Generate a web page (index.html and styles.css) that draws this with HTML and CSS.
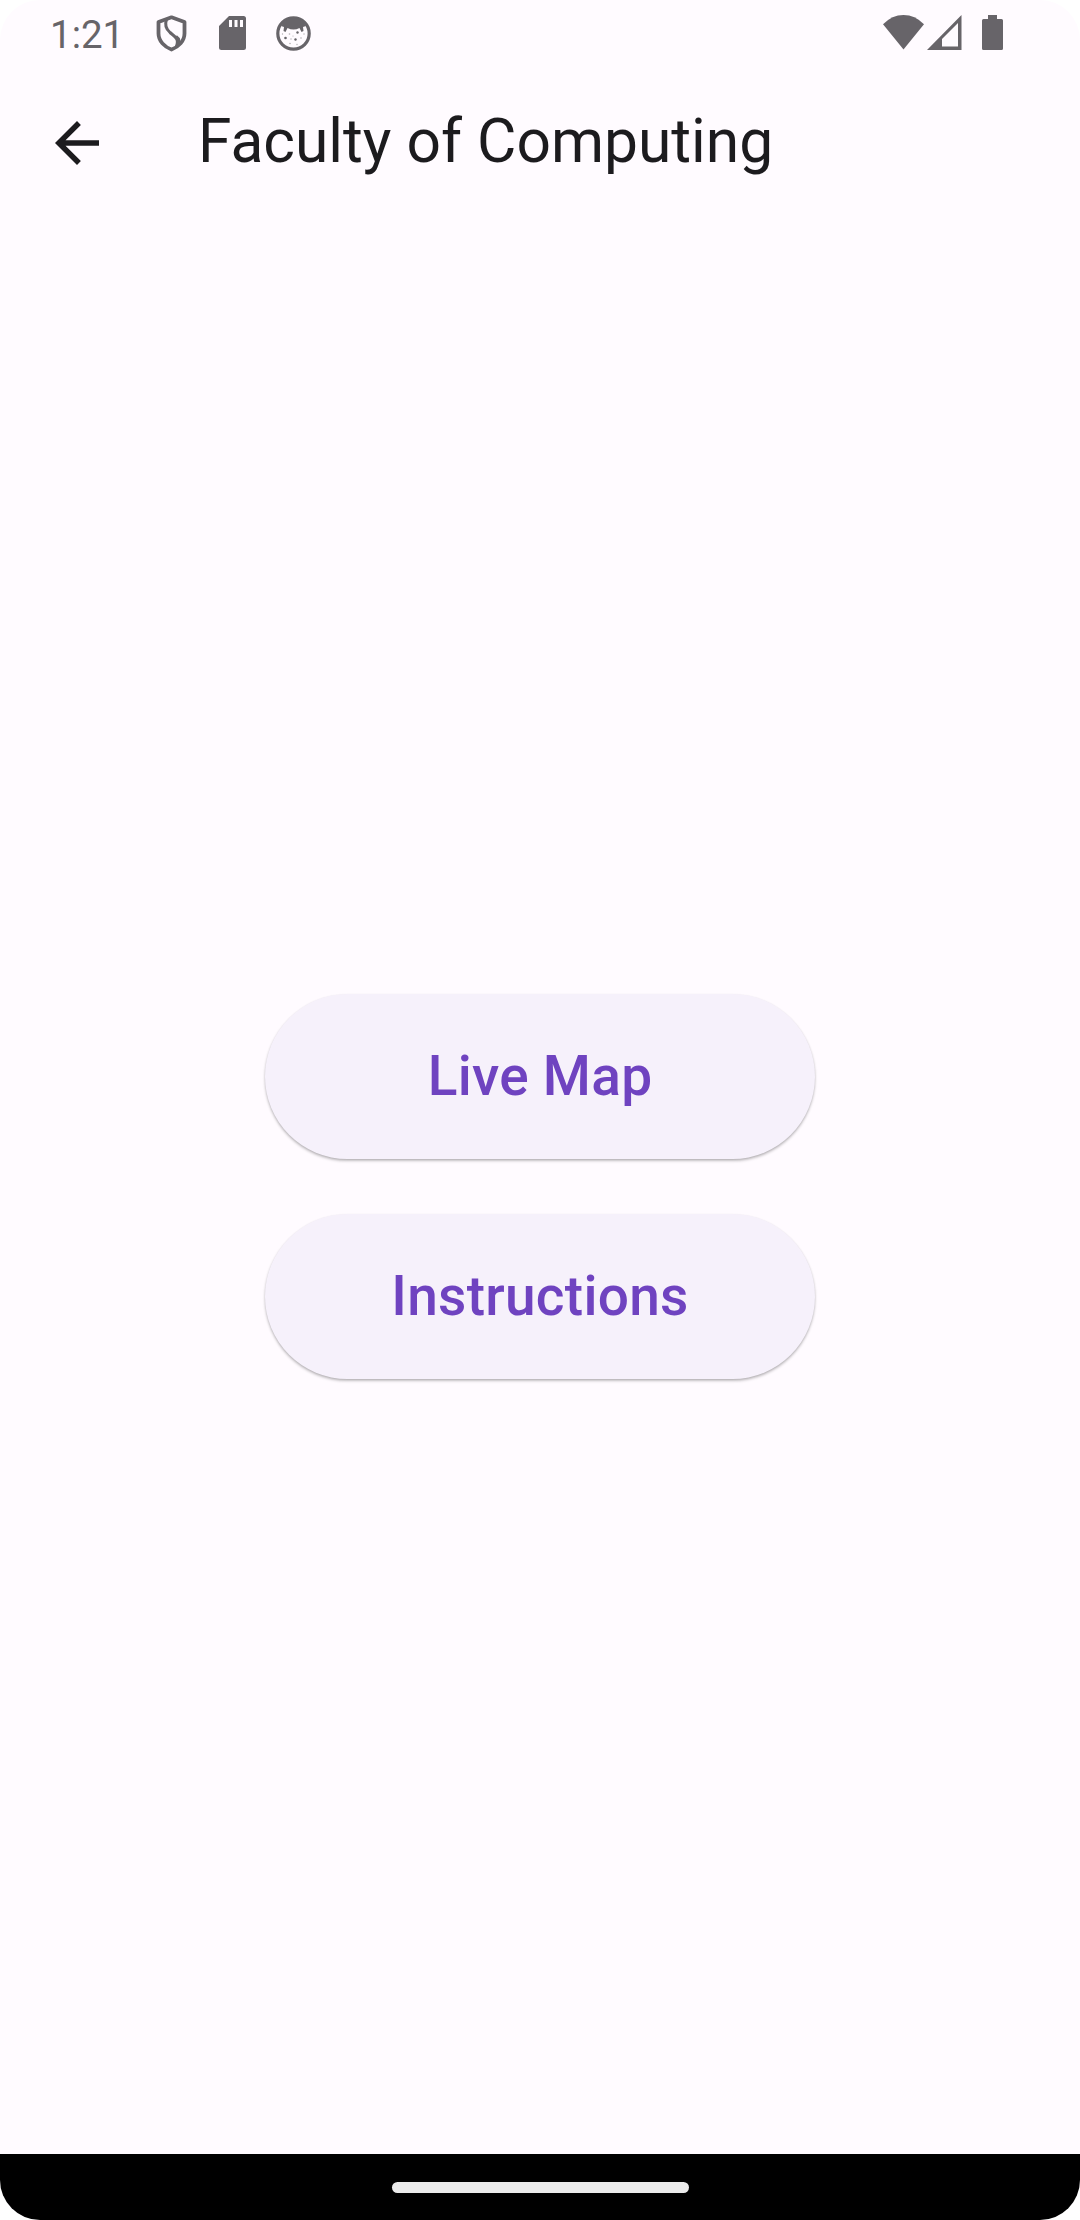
FILE: index.html
```html
<!DOCTYPE html>
<html lang="en">
<head>
<meta charset="utf-8">
<title>Faculty of Computing</title>
<link rel="stylesheet" href="styles.css">
</head>
<body>
<div class="screen">
  <div class="status-bar">
    <div class="status-left">
      <span class="clock">1:21</span>
      <svg class="shield" width="32" height="38" viewBox="0 0 32 38" fill="none" stroke="currentColor" stroke-width="3.800">
        <path d="M15.500 2.300L28.500 7V18.500C28.500 26 22.500 32 15.500 34.500C8.500 32 2.500 26 2.500 18.500V7Z" stroke-linejoin="round"/>
        <path d="M10.500 4.500C8.500 10 9.500 13.500 14 17.500C20 22.500 23.500 24 20 32.500" stroke-width="3"/>
        <path d="M20 21.500C23.500 24 23.500 27 21.500 30" stroke-width="3"/>
      </svg>
      <svg class="sd-card" width="27" height="35" viewBox="0 0 27 35">
        <path fill="currentColor" fill-rule="evenodd" d="M10 0H24.500Q27 0 27 2.500V31.500Q27 34 24.500 34H2.500Q0 34 0 31.500V10ZM10 4V11H13V4ZM15.500 4V11H18.500V4ZM21 4V11H24V4Z"/>
      </svg>
      <svg class="face" width="35" height="35" viewBox="0 0 35 35">
        <circle cx="17.500" cy="17.500" r="15.700" fill="none" stroke="currentColor" stroke-width="3.200"/>
        <path fill="currentColor" d="M5 10Q10 2 17.500 2T30 10L27 11L27.500 15L25.500 16L23.500 12Q17.500 15 11.500 12L9.500 16L7.500 15L8 11Z"/>
        <g fill="currentColor"><circle cx="21.500" cy="16.500" r="1.200"/><circle cx="9.500" cy="22" r="1.300"/><circle cx="19.500" cy="23.500" r="1.200"/></g>
        <g fill="currentColor" opacity=".5"><circle cx="13.500" cy="18" r=".8"/><circle cx="6.500" cy="18" r=".7"/><circle cx="15" cy="23" r=".7"/><circle cx="25" cy="22" r=".8"/><circle cx="28" cy="18" r=".7"/><circle cx="14" cy="27.500" r=".8"/><circle cx="21" cy="28.500" r=".7"/><circle cx="17" cy="20" r=".6"/></g>
      </svg>
    </div>
    <div class="status-right">
      <svg width="41" height="35" viewBox="0 0 41 35"><path fill="currentColor" d="M0 9.300Q9 0 20.500 0T41 9.300L20.500 34.500Z"/></svg>
      <svg class="signal" width="35" height="35" viewBox="0 0 35 35"><path fill="currentColor" fill-rule="evenodd" d="M34.500 0V35H0ZM31 8L15 24V31.500H31Z"/></svg>
      <svg class="battery" width="21" height="35" viewBox="0 0 21 35"><path fill="currentColor" d="M6 0H15V4H19.500Q21 4 21 5.500V33.500Q21 35 19.500 35H1.500Q0 35 0 33.500V5.500Q0 4 1.500 4H6Z"/></svg>
    </div>
  </div>
  <header class="app-bar">
    <svg class="back" width="66" height="66" viewBox="0 0 24 24"><path fill="currentColor" d="M20 11H7.830l5.590-5.590L12 4l-8 8 8 8 1.410-1.410L7.830 13H20v-2z"/></svg>
    <h1 class="title">Faculty of Computing</h1>
  </header>
  <main class="content">
    <button class="action">Live Map</button>
    <button class="action">Instructions</button>
  </main>
  <div class="nav-bar"><div class="handle"></div></div>
</div>
</body>
</html>
```
FILE: styles.css
```css
body {
  margin: 0;
  background: #fff;
  font-family: Roboto, sans-serif;
}

.screen {
  display: flex;
  flex-direction: column;
  width: 1080px;
  height: 2220px;
  overflow: hidden;
  border-radius: 40px;
  background: #fffbff;
}

svg {
  display: block;
  flex: none;
}

.status-bar {
  display: flex;
  justify-content: space-between;
  box-sizing: border-box;
  height: 66px;
  padding: 15px 77px 0 50px;
  color: #676469;
}

.status-left,
.status-right {
  display: flex;
  align-items: flex-start;
}

.clock {
  width: 106px;
  font-size: 38.5px;
  line-height: 39px;
}

.sd-card {
  margin: 1px 0 0 31px;
}

.face {
  margin: 1px 0 0 30px;
}

.signal {
  margin-left: 3px;
}

.battery {
  margin-left: 20px;
}

.app-bar {
  display: flex;
  align-items: center;
  height: 154px;
  padding-left: 44px;
  color: #1c1b1e;
}

.title {
  margin: 0 0 0 88px;
  padding-bottom: 4px;
  font-size: 60.5px;
  font-weight: 400;
  line-height: 77px;
}

.content {
  display: flex;
  flex: 1;
  flex-direction: column;
  align-items: center;
  justify-content: center;
  gap: 55px;
  padding-bottom: 1px;
}

.action {
  box-sizing: border-box;
  width: 550px;
  height: 165px;
  padding: 0;
  border: 0;
  border-radius: 83px;
  background: #f6f1fb;
  box-shadow: 0 2px 3px rgba(0, 0, 0, .22), 0 1px 2px rgba(0, 0, 0, .1);
  color: #6f43c0;
  font: 500 55px/77px Roboto, sans-serif;
  letter-spacing: .275px;
}

.nav-bar {
  display: flex;
  align-items: center;
  justify-content: center;
  height: 66px;
  background: #000;
}

.handle {
  width: 297px;
  height: 11px;
  border-radius: 6px;
  background: #ebebeb;
}
```
